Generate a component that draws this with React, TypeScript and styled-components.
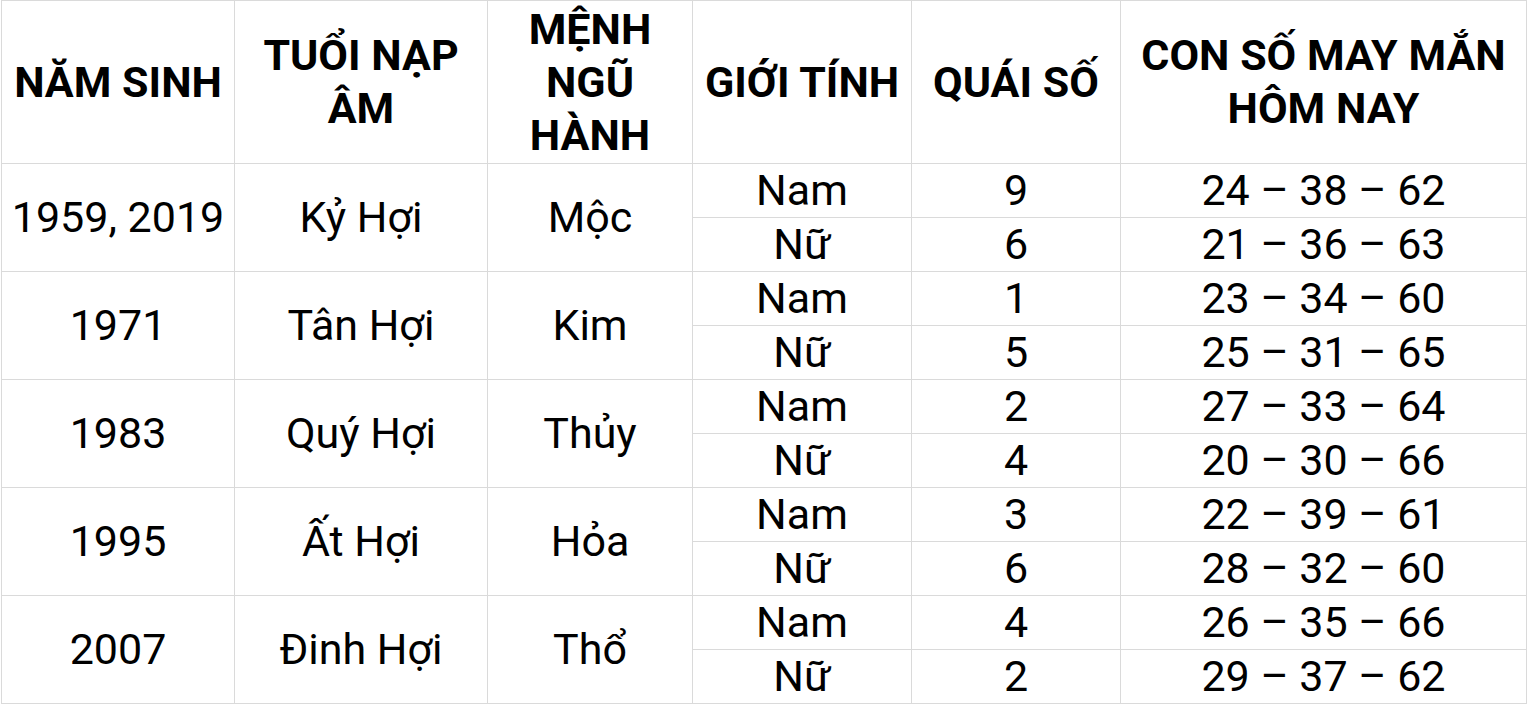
import React from 'react';
import styled, { createGlobalStyle } from 'styled-components';

const GlobalStyle = createGlobalStyle`
  html, body {
    margin: 0;
    padding: 0;
    background: #fff;
  }
  body {
    font-family: Roboto, 'Liberation Sans', sans-serif;
    color: #000;
  }
`;

interface Entry {
  year: string;
  tuoi: string;
  menh: string;
  nam: { quai: string; so: string };
  nu: { quai: string; so: string };
}

const data: Entry[] = [
  { year: '1959, 2019', tuoi: 'Kỷ Hợi', menh: 'Mộc', nam: { quai: '9', so: '24 – 38 – 62' }, nu: { quai: '6', so: '21 – 36 – 63' } },
  { year: '1971', tuoi: 'Tân Hợi', menh: 'Kim', nam: { quai: '1', so: '23 – 34 – 60' }, nu: { quai: '5', so: '25 – 31 – 65' } },
  { year: '1983', tuoi: 'Quý Hợi', menh: 'Thủy', nam: { quai: '2', so: '27 – 33 – 64' }, nu: { quai: '4', so: '20 – 30 – 66' } },
  { year: '1995', tuoi: 'Ất Hợi', menh: 'Hỏa', nam: { quai: '3', so: '22 – 39 – 61' }, nu: { quai: '6', so: '28 – 32 – 60' } },
  { year: '2007', tuoi: 'Đinh Hợi', menh: 'Thổ', nam: { quai: '4', so: '26 – 35 – 66' }, nu: { quai: '2', so: '29 – 37 – 62' } },
];

const Grid = styled.div`
  display: grid;
  grid-template-columns: 233px 253px 205px 219px 209px 406px;
  grid-template-rows: 163px repeat(10, 54px);
  margin-left: 1px;
  width: max-content;
  border-left: 1px solid #dadada;
  border-top: 1px solid #dadada;
`;

const Cell = styled.div<{ $span?: number }>`
  box-sizing: border-box;
  display: flex;
  align-items: center;
  justify-content: center;
  text-align: center;
  border-right: 1px solid #dadada;
  border-bottom: 1px solid #dadada;
  font-size: 43px;
  line-height: 1;
  grid-row: span ${(p) => p.$span ?? 1};
`;

const Head = styled(Cell)`
  font-weight: 700;
  font-size: 43px;
  line-height: 53px;
`;

const App = () => {
  return (
    <>
      <GlobalStyle />
      <Grid>
        <Head>NĂM SINH</Head>
        <Head>TUỔI NẠP<br />ÂM</Head>
        <Head>MỆNH<br />NGŨ<br />HÀNH</Head>
        <Head>GIỚI TÍNH</Head>
        <Head>QUÁI SỐ</Head>
        <Head>CON SỐ MAY MẮN<br />HÔM NAY</Head>
        {data.map((d) => (
          <React.Fragment key={d.year}>
            <Cell $span={2}>{d.year}</Cell>
            <Cell $span={2}>{d.tuoi}</Cell>
            <Cell $span={2}>{d.menh}</Cell>
            <Cell>Nam</Cell>
            <Cell>{d.nam.quai}</Cell>
            <Cell>{d.nam.so}</Cell>
            <Cell>Nữ</Cell>
            <Cell>{d.nu.quai}</Cell>
            <Cell>{d.nu.so}</Cell>
          </React.Fragment>
        ))}
      </Grid>
    </>
  );
};

export default App;
